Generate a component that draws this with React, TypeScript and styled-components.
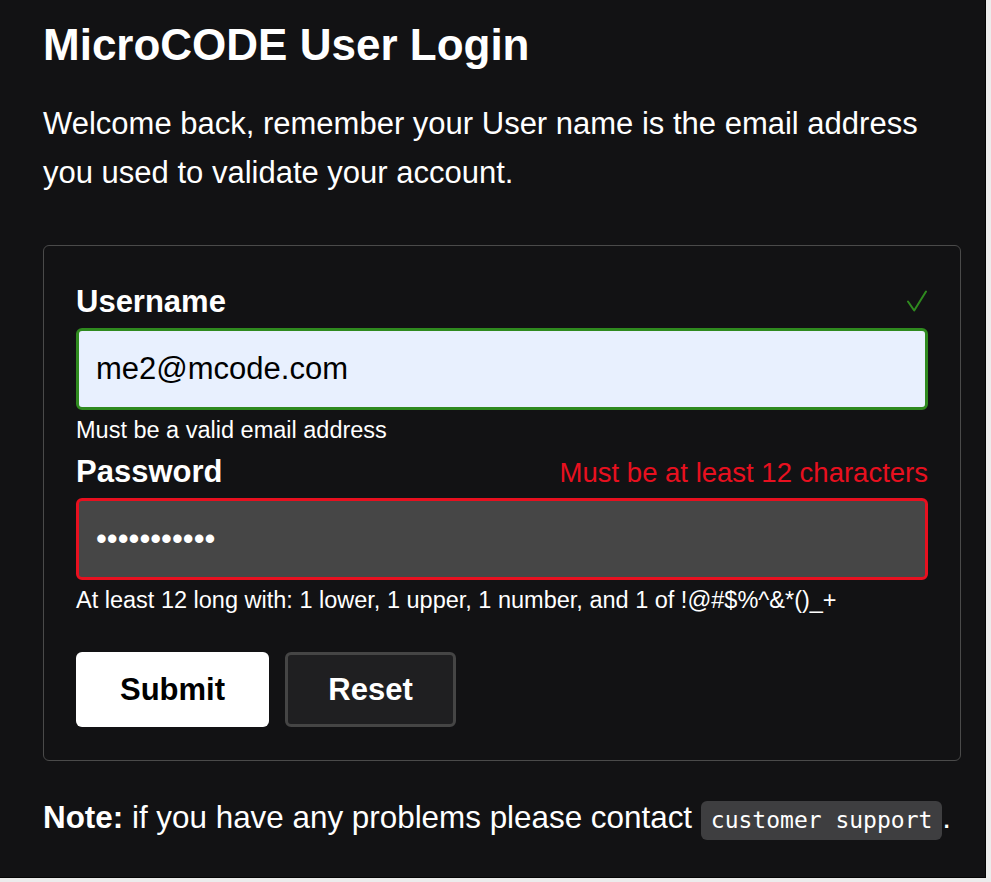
import React from 'react'
import styled, { createGlobalStyle } from 'styled-components'

const Global = createGlobalStyle`
  html, body {
    margin: 0;
    padding: 0;
    background: #ececec;
  }
  body {
    font-family: "Liberation Sans", Arial, sans-serif;
  }
`

const Frame = styled.div`
  box-sizing: border-box;
  width: 986px;
  height: 878px;
  background: #121214;
  border-right: 1px solid #050505;
  border-bottom: 1px solid #050505;
  color: #ffffff;
  padding: 19px 25px 0 43px;
`

const Title = styled.h1`
  margin: 0;
  font-size: 44px;
  font-weight: bold;
  line-height: 52px;
`

const Intro = styled.p`
  margin: 28px 0 0;
  font-size: 31px;
  line-height: 49px;
`

const Card = styled.form`
  box-sizing: border-box;
  margin-top: 48px;
  width: 918px;
  border: 1px solid #4a4a4a;
  border-radius: 6px;
  padding: 36px 32px 33px;
`

const LabelRow = styled.div`
  display: flex;
  align-items: baseline;
  justify-content: space-between;
  height: 40px;
  line-height: 40px;
`

const Label = styled.label`
  font-size: 31px;
  font-weight: bold;
`

const Error = styled.span`
  font-size: 27.5px;
  color: #e8101f;
`

const Check = styled.svg`
  width: 20px;
  height: 22px;
  margin-right: 1px;
`

const Input = styled.input<{ $state: 'ok' | 'bad' }>`
  box-sizing: border-box;
  display: block;
  width: 852px;
  height: 82px;
  margin-top: 6px;
  padding: 0 17px;
  border-radius: 6px;
  border: 3px solid ${p => (p.$state === 'ok' ? '#2f8a1f' : '#e8101f')};
  background: ${p => (p.$state === 'ok' ? '#e8f0fe' : '#464646')};
  color: ${p => (p.$state === 'ok' ? '#000000' : '#ffffff')};
  font-family: "Liberation Sans", Arial, sans-serif;
  font-size: 31px;
  outline: none;
`

const Hint = styled.div`
  font-size: 23.5px;
  line-height: 28px;
  margin-top: 6px;
  margin-bottom: 8px;
`

const Buttons = styled.div`
  display: flex;
  gap: 16px;
  margin-top: 38px;
`

const Button = styled.button<{ $primary?: boolean }>`
  box-sizing: border-box;
  height: 75px;
  width: ${p => (p.$primary ? '193px' : '171px')};
  border-radius: 6px;
  border: ${p => (p.$primary ? 'none' : '3px solid #454545')};
  background: ${p => (p.$primary ? '#ffffff' : '#1f1f21')};
  color: ${p => (p.$primary ? '#000000' : '#ffffff')};
  font-family: "Liberation Sans", Arial, sans-serif;
  font-size: 31px;
  font-weight: bold;
  cursor: pointer;
`

const Note = styled.p`
  margin: 35px 0 0;
  font-size: 31.4px;
  line-height: 44px;
`

const Code = styled.code`
  display: inline-block;
  font-family: "DejaVu Sans Mono", monospace;
  font-size: 23px;
  line-height: 39px;
  padding: 0 10px;
  background: #3e3e40;
  border-radius: 6px;
`

const App = () => {
  return (
    <>
      <Global />
      <Frame>
        <Title>MicroCODE User Login</Title>
        <Intro>
          Welcome back, remember your User name is the email address you used to validate your account.
        </Intro>
        <Card onSubmit={e => e.preventDefault()}>
          <LabelRow>
            <Label htmlFor="username">Username</Label>
            <Check viewBox="0 0 20 22" fill="none" stroke="#2f8a1f" strokeWidth="2" strokeLinecap="round" strokeLinejoin="round">
              <polyline points="1,11.5 7.2,20.5 19,1.5" />
            </Check>
          </LabelRow>
          <Input id="username" $state="ok" type="text" defaultValue="me2@mcode.com" />
          <Hint>Must be a valid email address</Hint>
          <LabelRow>
            <Label htmlFor="password">Password</Label>
            <Error>Must be at least 12 characters</Error>
          </LabelRow>
          <Input id="password" $state="bad" type="password" defaultValue="abcdefghijk" />
          <Hint>At least 12 long with: 1 lower, 1 upper, 1 number, and 1 of !@#$%^&amp;*()_+</Hint>
          <Buttons>
            <Button $primary type="submit">Submit</Button>
            <Button type="reset">Reset</Button>
          </Buttons>
        </Card>
        <Note>
          <b>Note:</b> if you have any problems please contact <Code>customer support</Code>.
        </Note>
      </Frame>
    </>
  )
}

export default App
